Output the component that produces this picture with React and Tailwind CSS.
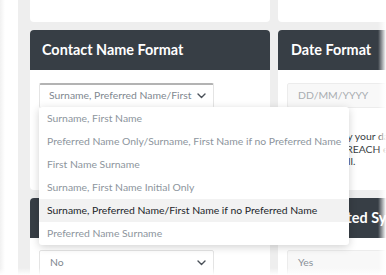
import React from "react";

function Chevron() {
  return (
    <svg width="9" height="6" viewBox="0 0 9 6" className="shrink-0">
      <path d="M1 1l3.5 3.5L8 1" fill="none" stroke="#4a5058" strokeWidth="1.4" strokeLinecap="round" strokeLinejoin="round" />
    </svg>
  );
}

const items = [
  "Surname, First Name",
  "Preferred Name Only/Surname, First Name if no Preferred Name",
  "First Name Surname",
  "Surname, First Name Initial Only",
  "Surname, Preferred Name/First Name if no Preferred Name",
  "Preferred Name Surname",
];

export default function App() {
  return (
    <div className="relative w-[386px] h-[275px] overflow-hidden bg-white font-['Lato',sans-serif]">
      <div className="flex h-full">
        <div className="w-[18px] shrink-0 bg-white" />
        <div className="flex-1 bg-[#eeeeee] pl-[12px] flex gap-[8px]">
          {/* left column */}
          <div className="w-[240px] shrink-0 flex flex-col gap-[8px]">
            <div className="h-[22px] shrink-0 bg-white rounded-b-[4px]" />
            <div className="h-[160px] shrink-0 bg-white rounded-[4px] overflow-hidden">
              <div className="h-[40px] bg-[#373e45] px-[12px] flex items-center text-white font-bold text-[14.4px]">
                Contact Name Format
              </div>
              <div className="px-[9px] pt-[13px]">
                <div className="w-[175px] h-[25px] border border-[#e4e4e4] border-t-[2px] border-t-[#b3b3b3] rounded-[2px] flex items-center justify-between pl-[9px] pr-[7px]">
                  <span className="text-[10.4px] text-[#7f8890] whitespace-nowrap overflow-hidden">Surname, Preferred Name/First</span>
                  <Chevron />
                </div>
              </div>
            </div>
            <div className="flex-1 bg-white rounded-t-[4px] overflow-hidden">
              <div className="h-[40px] bg-[#373e45] px-[12px] flex items-center text-white font-bold text-[14.4px]">
                Preferred Name
              </div>
              <div className="px-[9px] pt-[12px]">
                <div className="w-[175px] h-[26px] border border-[#e4e4e4] rounded-[2px] flex items-center justify-between pl-[10px] pr-[7px]">
                  <span className="text-[10.4px] text-[#7f8890]">No</span>
                  <Chevron />
                </div>
              </div>
            </div>
          </div>
          {/* right column */}
          <div className="w-[200px] shrink-0 flex flex-col gap-[8px]">
            <div className="h-[22px] shrink-0 bg-white rounded-b-[4px]" />
            <div className="h-[160px] shrink-0 bg-white rounded-[4px] overflow-hidden">
              <div className="h-[40px] bg-[#373e45] px-[13px] flex items-center text-white font-bold text-[14.4px] whitespace-nowrap">
                Date Format
              </div>
              <div className="px-[9px] pt-[13px]">
                <div className="h-[25px] border border-[#ececec] bg-[#f8f8f8] rounded-[2px] flex items-center pl-[10px]">
                  <span className="text-[10.4px] text-[#a9adb1]">DD/MM/YYYY</span>
                </div>
                <div className="mt-[22px] text-[10.4px] leading-[12.5px] text-[#3a3f44] whitespace-nowrap">
                  <div className="pl-[7px]">It will display your dates</div>
                  <div className="pl-[4px]">seen across REACH emails</div>
                  <div>reports as well.</div>
                </div>
              </div>
            </div>
            <div className="flex-1 bg-white rounded-t-[4px] overflow-hidden">
              <div className="h-[40px] bg-[#373e45] pl-[20px] pr-[13px] flex items-center text-white font-bold text-[14.4px] whitespace-nowrap">
                Connected Systems
              </div>
              <div className="px-[9px] pt-[12px]">
                <div className="h-[26px] border border-[#ececec] bg-[#f8f8f8] rounded-[2px] flex items-center pl-[10px]">
                  <span className="text-[10.4px] text-[#8a9198]">Yes</span>
                </div>
              </div>
            </div>
          </div>
        </div>
      </div>

      {/* dropdown */}
      <div className="absolute left-[39px] top-[107px] w-[310px] bg-white rounded-[3px] shadow-[0_2px_8px_rgba(0,0,0,0.18)] overflow-hidden">
        {items.map((t, i) => (
          <div
            key={i}
            className={
              i === 4
                ? "h-[23px] flex items-center pl-[8px] text-[10.4px] whitespace-nowrap bg-[#f2f2f2] text-[#22262a]"
                : "h-[23px] flex items-center pl-[8px] text-[10.4px] whitespace-nowrap text-[#8d959d]"
            }
          >
            {t}
          </div>
        ))}
      </div>

      {/* edge fades */}
      <div className="absolute left-0 top-0 h-full w-[5px] bg-gradient-to-r from-[#f1f1f1] to-white" />
      <div className="absolute right-0 top-0 h-full w-[8px] bg-gradient-to-r from-transparent to-white" />
      <div className="absolute left-0 bottom-0 w-full h-[7px] bg-gradient-to-b from-transparent to-white" />
    </div>
  );
}
